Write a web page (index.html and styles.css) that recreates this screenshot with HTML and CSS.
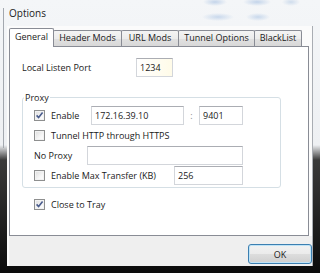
FILE: index.html
```html
<!DOCTYPE html>
<html lang="en">
<head>
  <meta charset="UTF-8">
  <meta name="viewport" content="width=device-width, initial-scale=1.0">
  <title>Options</title>
  <link rel="stylesheet" href="styles.css">
</head>
<body>

  <div class="window">
    <div class="titlebar">Options</div>

    <div class="client">
      <div class="tabs">
        <div class="tab active">General</div>
        <div class="tab">Header Mods</div>
        <div class="tab">URL Mods</div>
        <div class="tab">Tunnel Options</div>
        <div class="tab">BlackList</div>
      </div>

      <div class="panel">
        <div class="row port-row">
          <span class="lbl port-lbl">Local Listen Port</span>
          <input class="field w-port focused" type="text" value="1234">
        </div>

        <fieldset class="group">
          <legend>Proxy</legend>

          <div class="row">
            <label class="check w-enable">
              <span class="box"><svg width="9" height="9" viewBox="0 0 9 9"><path d="M1.6 4.4 L3.6 6.6 L7.6 1.6" /></svg></span>
              Enable
            </label>
            <input class="field w-ip" type="text" value="172.16.39.10">
            <span class="colon">:</span>
            <input class="field w-pt" type="text" value="9401">
          </div>

          <div class="row">
            <label class="check">
              <span class="box"></span>
              Tunnel HTTP through HTTPS
            </label>
          </div>

          <div class="row">
            <span class="lbl w-noproxy">No Proxy</span>
            <input class="field w-list" type="text" value="">
          </div>

          <div class="row">
            <label class="check w-max">
              <span class="box"></span>
              Enable Max Transfer (KB)
            </label>
            <input class="field w-kb" type="text" value="256">
          </div>
        </fieldset>

        <div class="row tray-row">
          <label class="check">
            <span class="box"><svg width="9" height="9" viewBox="0 0 9 9"><path d="M1.6 4.4 L3.6 6.6 L7.6 1.6" /></svg></span>
            Close to Tray
          </label>
        </div>
      </div>

      <div class="footer">
        <button class="btn-ok" type="button">OK</button>
      </div>
    </div>
  </div>

</body>
</html>
```

FILE: styles.css
```css
body {
  margin: 0;
}
.window {
  width: 320px;
  height: 273px;
  display: flex;
  flex-direction: column;
  overflow: hidden;
  font-family: "Open Sans", "Noto Sans", sans-serif;
  font-size: 9px;
  color: #1a1a1a;
  background:
    linear-gradient(#a3a8af, #a3a8af) 3px 8px / 1px 140px no-repeat,
    linear-gradient(180deg, #f4f6f8 0, #eef0f3 145px, #3a3a3a 160px, #0b0b0b 273px);
}
.titlebar {
  height: 26px;
  box-sizing: border-box;
  padding: 6px 0 0 9px;
  line-height: 14px;
  font-size: 10px;
  color: #222;
  background:
    radial-gradient(12px 4px at 215px 2px, #c3d4ea, transparent),
    radial-gradient(14px 4px at 257px 2px, #c3d4ea, transparent),
    radial-gradient(9px 4px at 291px 2px, #cfdcec, transparent),
    radial-gradient(16px 4px at 218px 17px, #c8d8ec, transparent),
    radial-gradient(12px 4px at 258px 17px, #c8d8ec, transparent);
}
.client {
  flex: 1;
  display: flex;
  flex-direction: column;
  margin: 0 7px 7px 7px;
  padding: 2px 0 0 2px;
  background: #fbfbfb;
  border-right: 1px solid #a9adb3;
}
.tabs {
  display: flex;
  align-items: flex-end;
  height: 18px;
}
.tab {
  height: 16px;
  box-sizing: border-box;
  margin-right: -1px;
  border: 1px solid #898c95;
  border-bottom: none;
  border-radius: 2px 2px 0 0;
  background: linear-gradient(#f4f4f4, #ececec 50%, #e1e1e1 51%, #d8d8d8);
  text-align: center;
  line-height: 14px;
}
.tab:nth-child(1) { width: 45px; }
.tab:nth-child(2) { width: 69px; }
.tab:nth-child(3) { width: 58px; }
.tab:nth-child(4) { width: 77px; }
.tab:nth-child(5) { width: 48px; }
.tab.active {
  height: 19px;
  margin-bottom: -1px;
  background: #fff;
  line-height: 15px;
  position: relative;
  z-index: 1;
}
.panel {
  width: 300px;
  height: 190px;
  box-sizing: border-box;
  padding: 11px 0 0 12px;
  border: 1px solid #898c95;
  background: #fff;
}
.row {
  display: flex;
  align-items: center;
  height: 20px;
}
.port-row {
  height: 19px;
}
.port-lbl {
  width: 114px;
}
.field {
  height: 19px;
  box-sizing: border-box;
  padding: 0 3px;
  border: 1px solid #d3d6db;
  border-top-color: #abadb3;
  background: #fff;
  font-family: inherit;
  font-size: 9px;
  color: #1a1a1a;
  outline: none;
}
.focused {
  background: linear-gradient(90deg, #fff, #fffbe8);
}
.w-port { width: 37px; }
.w-ip { width: 93px; }
.w-pt { width: 44px; }
.w-list { width: 156px; }
.w-kb { width: 69px; }
.colon {
  width: 15px;
  text-align: center;
  color: #8a8a8a;
}
.group {
  width: 259px;
  box-sizing: border-box;
  margin: 14px 0 0 0;
  padding: 1px 0 2px 11px;
  border: 1px solid #d5dfe5;
  border-radius: 3px;
}
.group legend {
  margin-left: -10px;
  padding: 0 1px;
  line-height: 13px;
}
.check {
  display: flex;
  align-items: center;
  gap: 6px;
}
.w-enable { width: 57px; }
.w-max { width: 140px; }
.w-noproxy { width: 53px; }
.box {
  width: 11px;
  height: 11px;
  box-sizing: border-box;
  display: flex;
  align-items: center;
  justify-content: center;
  border: 1px solid #8e8f8f;
  background: linear-gradient(135deg, #dcdcdc, #f6f6f6 60%, #fff);
  box-shadow: inset 0 0 0 1px #f2f2f2;
}
.box svg path {
  fill: none;
  stroke: #4a5c8c;
  stroke-width: 1.6;
}
.tray-row {
  margin: 6px 0 0 12px;
}
.footer {
  flex: 1;
  display: flex;
  justify-content: flex-end;
  align-items: flex-start;
  padding: 8px 0 0 0;
  background: #efefef;
}
.btn-ok {
  width: 64px;
  height: 20px;
  margin-right: 0;
  border: 1px solid #3c7fb1;
  border-radius: 3px;
  background: linear-gradient(#f2f2f2, #ebebeb 50%, #dddddd 51%, #cfcfcf);
  box-shadow: inset 0 0 0 1px #bfe3f6;
  font-family: inherit;
  font-size: 9px;
  color: #1a1a1a;
  padding: 0;
}
```
